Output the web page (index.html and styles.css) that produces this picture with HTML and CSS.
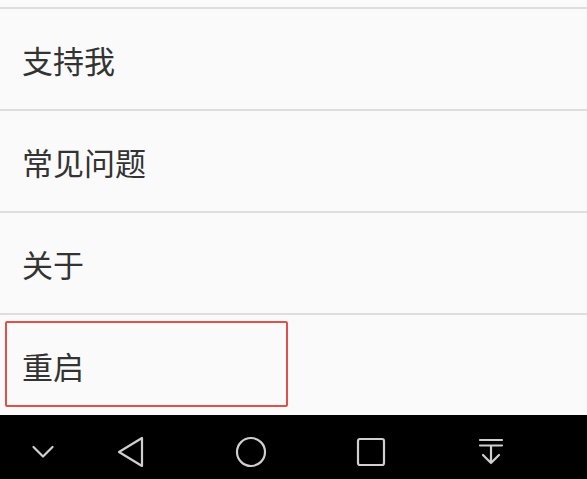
FILE: index.html
```html
<!DOCTYPE html>
<html lang="zh">

<head>
  <meta charset="UTF-8">
  <meta name="viewport" content="width=device-width, initial-scale=1.0">
  <title>设置</title>
  <link rel="stylesheet" href="styles.css">
</head>

<body>
  <div class="menuList">
    <div class="menuTop"></div>
    <div class="menuItem">支持我</div>
    <div class="menuItem">常见问题</div>
    <div class="menuItem">关于</div>
    <div class="menuItem">
      重启
      <div class="highlightBox"></div>
    </div>
  </div>

  <div class="navBar">
    <svg class="navIcon" width="24" height="24" viewBox="0 0 24 24">
      <path d="M2.5 7 L12 16.5 L21.5 7" />
    </svg>
    <svg class="navIcon" width="32" height="32" viewBox="0 0 32 32">
      <path d="M27 2 L27 30 L4 16 Z" />
    </svg>
    <svg class="navIcon" width="32" height="32" viewBox="0 0 32 32">
      <circle cx="16" cy="16" r="14" />
    </svg>
    <svg class="navIcon" width="32" height="32" viewBox="0 0 32 32">
      <rect x="3" y="3" width="26" height="26" rx="2" />
    </svg>
    <svg class="navIcon" width="32" height="32" viewBox="0 0 32 32">
      <path d="M5 4 H27 M5 9.5 H27 M16 9.5 V27 M8 19 L16 27 L24 19" />
    </svg>
  </div>
</body>

</html>
```

FILE: styles.css
```css
:root {
  --lineColor: #dedede;
  --textColor: #333;
  --markColor: #e2504a;
}

body {
  margin: 0;
  background: #fafafa;
  font-family: "Noto Sans CJK SC", "Noto Sans", sans-serif;
  overflow: hidden;
}

.menuList {
  display: flex;
  flex-direction: column;
}

.menuTop {
  height: 7px;
}

.menuItem {
  position: relative;
  height: 100px;
  border-top: 2px solid var(--lineColor);
  display: flex;
  align-items: center;
  padding-left: 22px;
  font-size: 31px;
  color: var(--textColor);
}

.highlightBox {
  position: absolute;
  left: 5px;
  top: 6px;
  width: 279px;
  height: 82px;
  border: 2px solid var(--markColor);
  border-radius: 2px;
}

.navBar {
  height: 54px;
  padding-top: 10px;
  background: #000;
  display: grid;
  grid-template-columns: 86px 90px 150px 90px 150px;
  align-items: center;
  justify-items: center;
}

.navIcon {
  fill: none;
  stroke: #cfcfcf;
  stroke-width: 2.2;
  stroke-linecap: round;
  stroke-linejoin: round;
}
```
